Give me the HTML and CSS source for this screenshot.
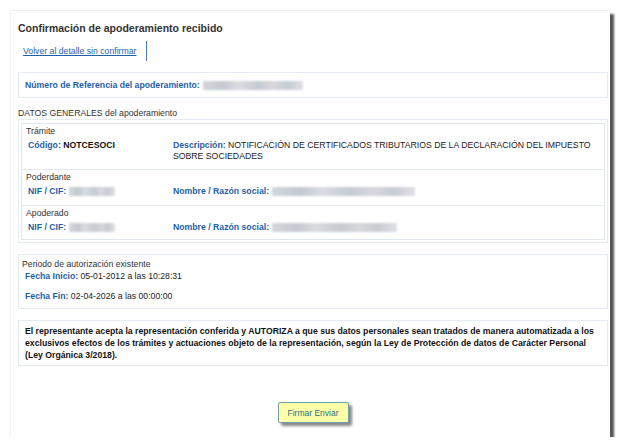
FILE: index.html
```html
<!DOCTYPE html>
<html>
<head>
<meta charset="utf-8" />
<title>Confirmación de apoderamiento</title>
<link rel="stylesheet" href="styles.css">
</head>
<body>
<div class="card">
	<h1 class="title">Confirmación de apoderamiento recibido</h1>
	<div class="links">
		<a href="#" class="back">Volver al detalle sin confirmar</a>
	</div>

	<div class="box ref">
		<span class="lbl">Número de Referencia del apoderamiento:</span>
		<span class="blur" style="width:100px"></span>
	</div>

	<div class="caption">DATOS GENERALES del apoderamiento</div>
	<div class="box datos">
		<div class="inner">
			<div class="sec s1">
				<div class="sec-t">Trámite</div>
				<div class="row">
					<div><span class="lbl">Código:</span> <b>NOTCESOCI</b></div>
					<div><span class="lbl">Descripción:</span> NOTIFICACIÓN DE CERTIFICADOS TRIBUTARIOS DE LA DECLARACIÓN DEL IMPUESTO SOBRE SOCIEDADES</div>
				</div>
			</div>
			<div class="sec">
				<div class="sec-t">Poderdante</div>
				<div class="row">
					<div><span class="lbl">NIF / CIF:</span> <span class="blur" style="width:46px"></span></div>
					<div><span class="lbl">Nombre / Razón social:</span> <span class="blur" style="width:143px"></span></div>
				</div>
			</div>
			<div class="sec last">
				<div class="sec-t">Apoderado</div>
				<div class="row">
					<div><span class="lbl">NIF / CIF:</span> <span class="blur" style="width:46px"></span></div>
					<div><span class="lbl">Nombre / Razón social:</span> <span class="blur" style="width:125px"></span></div>
				</div>
			</div>
		</div>
	</div>

	<div class="box periodo">
		<div class="sec-t">Periodo de autorización existente</div>
		<p><span class="lbl">Fecha Inicio:</span> 05-01-2012 a las 10:28:31</p>
		<p class="fin"><span class="lbl">Fecha Fin:</span> 02-04-2026 a las 00:00:00</p>
	</div>

	<div class="box legal">
		El representante acepta la representación conferida y AUTORIZA a que sus datos personales sean tratados de manera automatizada a los exclusivos efectos de los trámites y actuaciones objeto de la representación, según la Ley de Protección de datos de Carácter Personal (Ley Orgánica 3/2018).
	</div>

	<div class="actions">
		<button class="btn">Firmar Enviar</button>
	</div>
</div>
</body>
</html>
```

FILE: styles.css
```css
*{ margin:0; padding:0; box-sizing:border-box;}
body{ background:#fff; font-family:"Liberation Sans", Arial, sans-serif; font-size:8.7px; color:#222;}
.card{ width:600px; height:427px; margin:10px 0 0 10px; padding:10px 2px 0 7px; background:#fff; border-top:1px solid #eee; border-left:1px solid #f2f2f2; box-shadow:4px 4px 2px #555;}
.title{ font-size:10.5px; font-weight:bold; color:#333; line-height:14px;}
.links{ margin:6px 0 0 5px; height:20px; display:flex; align-items:center;}
.back{ color:#1f5fa6; text-decoration:underline; padding-right:10px; border-right:1px solid #4d7fb6; line-height:20px;}
.box{ border:1px solid #e4ebf2; background:#fff;}
.lbl{ color:#1f5fa6; font-weight:bold;}
.ref{ margin-top:11px; height:26px; padding:0 6px; display:flex; align-items:center; gap:3px;}
.blur{ display:inline-block; height:9px; vertical-align:middle; background:linear-gradient(90deg,#d4d6dc,#c4c8d0 20%,#dadce0 35%,#c6cad2 55%,#d8d8dc 70%,#c8cbd3 85%,#e2e2e4); filter:blur(0.8px);}
.caption{ margin-top:10px; line-height:11px; color:#333;}
.datos{ height:124px; padding:3px 2px;}
.inner{ border:1px solid #e0e7ef; height:117px; display:flex; flex-direction:column;}
.sec{ border-top:1px solid #e0e7ef; padding:1px 4px 0; height:36px;}
.sec.s1{ border-top:none; height:45px;}
.sec.last{ flex:1;}
.sec-t{ color:#333; line-height:12px;}
.row{ display:grid; grid-template-columns:145px 1fr; padding:3px 0 0 2px; line-height:11px; color:#222;}
.row b{ color:#111;}
.periodo{ margin-top:11px; height:55px; padding:3px 3px;}
.periodo p{ padding-left:3px; line-height:12px;}
.periodo p.fin{ margin-top:8px;}
.legal{ margin-top:11px; height:46px; padding:4px 6px; font-weight:bold; line-height:12px; color:#111;}
.actions{ display:flex; justify-content:center; margin-top:36px;}
.btn{ width:71px; height:21px; background:#ffffa8; border:1px solid #6c9fb2; border-radius:2px; color:#2e6f86; font-family:"Liberation Sans", Arial, sans-serif; font-size:8.5px; box-shadow:3px 3px 3px #888;}
```
